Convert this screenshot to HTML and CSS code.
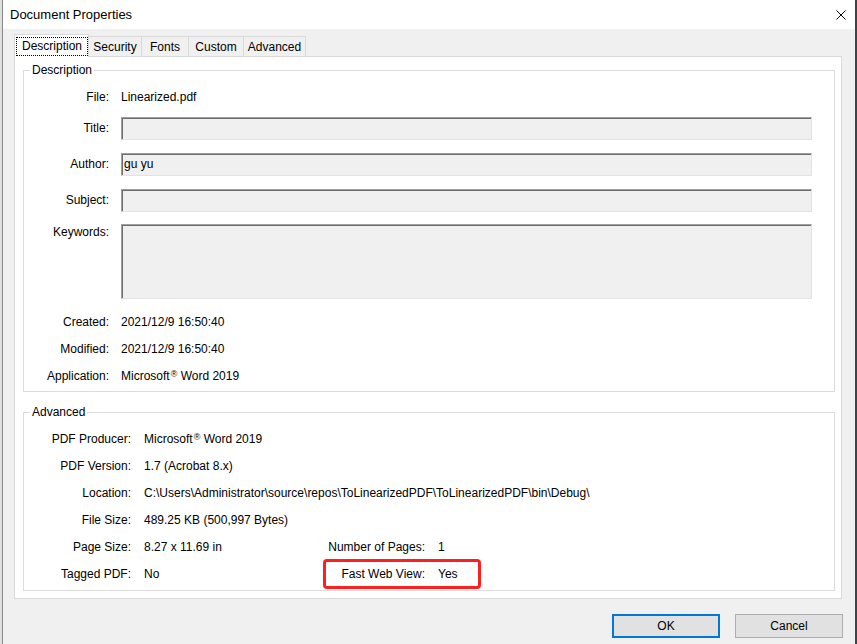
FILE: index.html
```html
<!DOCTYPE html>
<html lang="en">
<head>
<meta charset="utf-8">
<title>Document Properties</title>
<link rel="stylesheet" href="styles.css">
</head>
<body>
<div class="window">
  <div class="titlebar">
    <span class="title">Document Properties</span>
    <svg class="close" width="10" height="10" viewBox="0 0 10 10" aria-hidden="true">
      <path d="M0.5 0.5 L9.5 9.5 M9.5 0.5 L0.5 9.5" stroke="#000" stroke-width="1" fill="none"/>
    </svg>
  </div>
  <div class="tabs">
    <div class="tab active tab-desc"><span class="focus">Description</span></div>
    <div class="tab tab-sec">Security</div>
    <div class="tab tab-fonts">Fonts</div>
    <div class="tab tab-custom">Custom</div>
    <div class="tab tab-adv">Advanced</div>
  </div>
  <div class="panel">
    <fieldset class="group group-desc">
      <legend>Description</legend>
      <div class="row text-row"><span class="label">File:</span><span class="value">Linearized.pdf</span></div>
      <div class="row field-row"><span class="label">Title:</span><div class="input"></div></div>
      <div class="row field-row"><span class="label">Author:</span><div class="input">gu yu</div></div>
      <div class="row field-row"><span class="label">Subject:</span><div class="input"></div></div>
      <div class="row area-row"><span class="label">Keywords:</span><div class="input area"></div></div>
      <div class="row text-row"><span class="label">Created:</span><span class="value">2021/12/9 16:50:40</span></div>
      <div class="row text-row"><span class="label">Modified:</span><span class="value">2021/12/9 16:50:40</span></div>
      <div class="row text-row"><span class="label">Application:</span><span class="value">Microsoft<sup class="reg">®</sup> Word 2019</span></div>
    </fieldset>
    <fieldset class="group group-adv">
      <legend>Advanced</legend>
      <div class="adv-grid">
        <span class="label">PDF Producer:</span><span class="value">Microsoft<sup class="reg">®</sup> Word 2019</span><span></span><span></span>
        <span class="label">PDF Version:</span><span class="value">1.7 (Acrobat 8.x)</span><span></span><span></span>
        <span class="label">Location:</span><span class="value wide">C:\Users\Administrator\source\repos\ToLinearizedPDF\ToLinearizedPDF\bin\Debug\</span>
        <span class="label">File Size:</span><span class="value">489.25 KB (500,997 Bytes)</span><span></span><span></span>
        <span class="label">Page Size:</span><span class="value">8.27 x 11.69 in</span>
        <div class="pair"><span class="label">Number of Pages:</span><span class="value">1</span></div>
        <span class="label">Tagged PDF:</span><span class="value">No</span>
        <div class="pair highlight"><span class="label">Fast Web View:</span><span class="value">Yes</span></div>
      </div>
    </fieldset>
  </div>
  <div class="buttons">
    <button class="btn btn-ok">OK</button>
    <button class="btn">Cancel</button>
  </div>
</div>
</body>
</html>
```
FILE: styles.css
```css
html, body {
  margin: 0;
  height: 100%;
}
body {
  background: linear-gradient(to right, #dedede 50%, #3d4346 50%);
  font-family: "Liberation Sans", Arial, sans-serif;
  font-size: 12px;
  color: #000;
  overflow: hidden;
}
.window {
  margin-left: 2px;
  width: 852px;
  height: 644px;
  border-left: 1px solid #8a8a8a;
  background: #f0f0f0;
  display: flex;
  flex-direction: column;
}
.titlebar {
  height: 29px;
  background: #fff;
  display: flex;
  align-items: center;
  justify-content: space-between;
  padding: 0 9px 0 7px;
  flex: none;
}
.title {
  font-size: 13px;
  line-height: 16px;
  padding-top: 1px;
}
.close {
  display: block;
  margin-top: 1px;
}
.tabs {
  display: flex;
  align-items: flex-end;
  height: 22px;
  margin: 5px 0 0 11px;
  position: relative;
  z-index: 1;
  flex: none;
}
.tab {
  box-sizing: border-box;
  height: 20px;
  border: 1px solid #d9d9d9;
  border-left: none;
  border-bottom: none;
  background: #f0f0f0;
  display: flex;
  align-items: center;
  justify-content: center;
  line-height: 16px;
}
.tab.active {
  height: 23px;
  margin-bottom: -1px;
  border-left: 1px solid #d9d9d9;
  background: #fff;
  justify-content: flex-end;
}
.focus {
  box-sizing: border-box;
  width: 72px;
  height: 19px;
  border: 1px dotted #000;
  display: flex;
  align-items: center;
  justify-content: center;
  padding-bottom: 1px;
}
.tab-desc { width: 75px; }
.tab-sec { width: 53px; }
.tab-fonts { width: 47px; }
.tab-custom { width: 55px; }
.tab-adv { width: 62px; }

.panel {
  box-sizing: border-box;
  width: 828px;
  margin-left: 11px;
  background: #fff;
  border: 1px solid #d9d9d9;
  padding: 5px 6px 7px 8px;
  flex: none;
}
.group {
  margin: 0;
  border: 1px solid #dcdcdc;
  min-inline-size: 0;
}
.group legend {
  margin-left: 6px;
  padding: 0 2px;
  line-height: 16px;
}
.group-desc {
  padding: 5px 22px 2px 0;
}
.group-adv {
  margin-top: 12px;
  padding: 5px 10px 3px 0;
}
.row {
  display: grid;
  grid-template-columns: 85px 1fr;
  column-gap: 12px;
  align-items: center;
}
.label {
  text-align: right;
  line-height: 16px;
  white-space: nowrap;
}
.value {
  line-height: 16px;
  white-space: nowrap;
}
.reg {
  font-size: 9px;
  vertical-align: 3px;
  line-height: 0;
  margin-left: 1px;
}
.text-row { height: 27px; }
.field-row { height: 36px; }
.area-row {
  height: 90px;
  align-items: start;
}
.area-row .label { margin-top: 6px; }
.input {
  box-sizing: border-box;
  height: 23px;
  background: #f0f0f0;
  border: 1px solid;
  border-color: #a0a0a0 #e3e3e3 #e3e3e3 #a0a0a0;
  box-shadow: inset 1px 1px 0 #6d6d6d;
  padding-left: 2px;
  display: flex;
  align-items: center;
  line-height: 16px;
}
.input.area {
  height: 75px;
  margin-top: 6px;
}
.adv-grid {
  display: grid;
  grid-template-columns: 107px 127px 141px 1fr;
  grid-auto-rows: 27px;
  column-gap: 13px;
  align-items: center;
}
.value.wide {
  grid-column: 2 / -1;
}
.pair {
  grid-column: 3 / 5;
  display: grid;
  grid-template-columns: 141px 1fr;
  column-gap: 13px;
  align-items: center;
  height: 27px;
  position: relative;
}
.highlight::after {
  content: "";
  position: absolute;
  left: 39px;
  top: -1px;
  width: 158px;
  height: 30px;
  box-sizing: border-box;
  border: 3px solid #ff1f1f;
  border-radius: 4px;
}
.buttons {
  display: flex;
  justify-content: flex-end;
  gap: 15px;
  margin: 15px 12px 0 0;
}
.btn {
  box-sizing: border-box;
  width: 108px;
  height: 24px;
  background: #e1e1e1;
  border: 1px solid #adadad;
  font-family: "Liberation Sans", Arial, sans-serif;
  font-size: 12px;
  color: #000;
  padding: 0;
  line-height: 16px;
}
.btn-ok {
  border: 2px solid #0078d7;
}
```
